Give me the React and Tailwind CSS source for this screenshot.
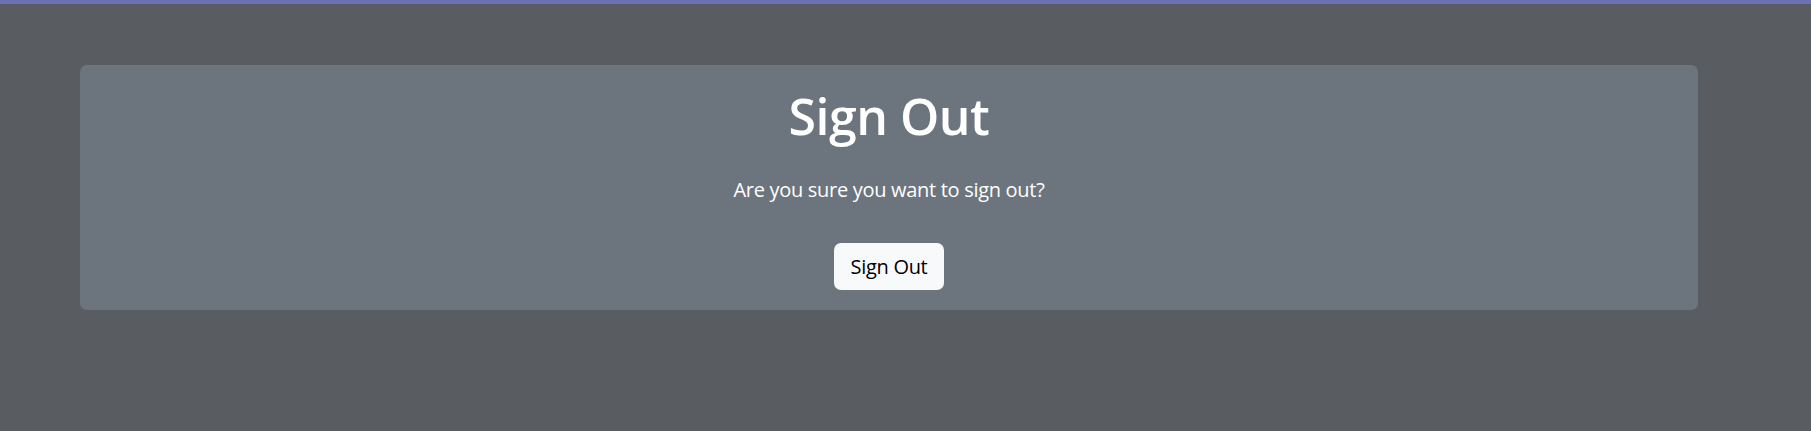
import React from "react";

const font = { fontFamily: '"Open Sans", "Noto Sans", sans-serif' };

export default function App() {
  return (
    <div className="min-h-[431px] bg-[#595c61] border-t-4 border-[#6c6fb4]" style={font}>
      <div className="pt-[61px] pl-[80px]">
        {/* Sign out card */}
        <div className="w-[1618px] rounded-[7px] bg-[#6c757d] pt-[21px] pb-[20px] flex flex-col items-center text-white">
          <h1 className="text-[50px] leading-[60px] font-semibold tracking-[-0.5px]">Sign Out</h1>
          <p className="mt-[29px] text-[20px] leading-[30px] tracking-[-0.3px]">
            Are you sure you want to sign out?
          </p>
          <button className="mt-[38px] h-[47px] pt-[1px] px-[17px] rounded-[7px] bg-[#f8f9fa] text-black text-[20px] leading-[30px] tracking-[-0.3px]">
            Sign Out
          </button>
        </div>
      </div>
    </div>
  );
}
